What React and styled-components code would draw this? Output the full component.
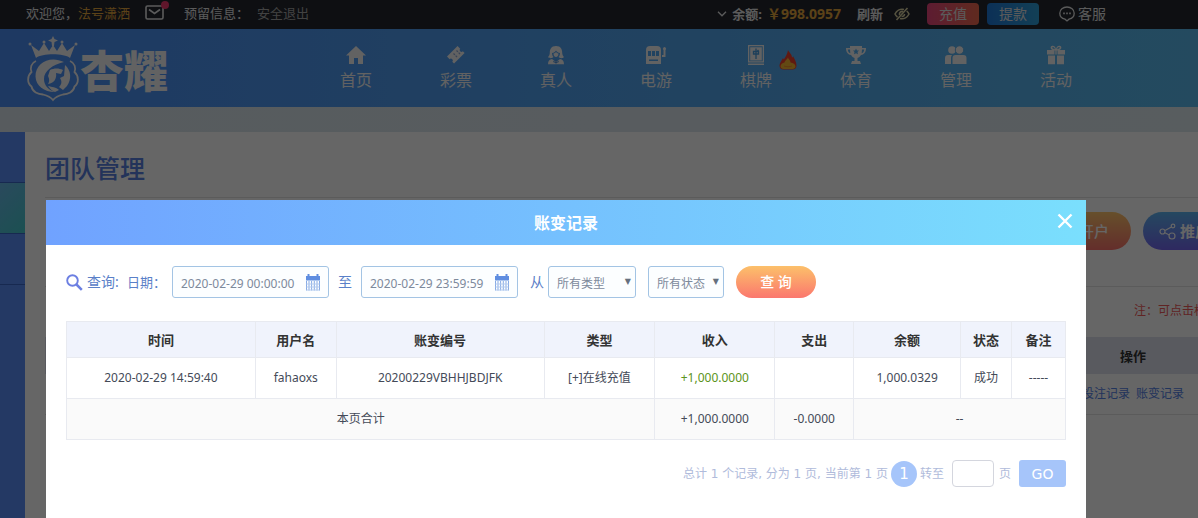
import { useState } from "react";
import styled, { createGlobalStyle, css } from "styled-components";

// *** [ data ] **************************************************************************
const navItems = [
  { label: "首页", icon: "home" },
  { label: "彩票", icon: "ticket" },
  { label: "真人", icon: "dealer" },
  { label: "电游", icon: "slots" },
  { label: "棋牌", icon: "tile", hot: true },
  { label: "体育", icon: "trophy" },
  { label: "管理", icon: "users" },
  { label: "活动", icon: "gift" },
];

const columns = [
  { label: "时间", width: 18.9 },
  { label: "用户名", width: 8.1 },
  { label: "账变编号", width: 20.8 },
  { label: "类型", width: 11.1 },
  { label: "收入", width: 12 },
  { label: "支出", width: 7.9 },
  { label: "余额", width: 10.7 },
  { label: "状态", width: 5.1 },
  { label: "备注", width: 5.4 },
];

const records = [
  {
    time: "2020-02-29 14:59:40",
    user: "fahaoxs",
    number: "20200229VBHHJBDJFK",
    type: "[+]在线充值",
    income: "+1,000.0000",
    expense: "",
    balance: "1,000.0329",
    status: "成功",
    note: "-----",
  },
];

// *** [ icons ] *************************************************************************
const navPaths = {
  home: <path d="M10 1 0 10.500h3V19h5v-6h4v6h5v-8.500h3z" />,
  ticket: (
    <>
      <path d="M12 0l3 3a2 2 0 0 0 3 3l2 2L8 20l-2-2a2 2 0 0 0-3-3l-3-3z" transform="translate(1 1) scale(.88)" />
      <path d="M7.500 8.500l4 4M10.500 5.500l4 4" stroke="#8fa9d8" strokeWidth="1.300" strokeDasharray="2 1" />
    </>
  ),
  dealer: (
    <>
      <path
        fillRule="evenodd"
        d="M10 1C5 1 3.800 4.500 3.800 8c0 1.500-.8 3-1.800 4 1 1.300 2.500 1.300 4 1l1.500-1c-1-1-1.500-2.500-1.500-4 2 0 3-1 4-2.500C11 7 12 8 14 8c0 1.500-.5 3-1.500 4l1.500 1c1.500.3 3 .3 4-1-1-1-1.800-2.500-1.800-4C16.200 4.500 15 1 10 1z"
      />
      <path d="M7.500 8.500c1.200-.3 2-.8 2.500-1.500.5.700 1.300 1.200 2.500 1.500 0 2-1 3.500-2.500 3.500s-2.500-1.500-2.500-3.500z" />
      <path d="M6 14c-2.500.3-4 2-4 5.300h16c0-3.300-1.500-5-4-5.300l-2.500 2h-3z" />
      <path d="M10 14.500v4M7.300 16.500l2.700 1.200 2.700-1.200" fill="none" stroke="#4f93dd" strokeWidth="1.200" />
    </>
  ),
  slots: (
    <>
      <path
        fillRule="evenodd"
        d="M4 1h7a4 4 0 0 1 4 4v14H0V5a4 4 0 0 1 4-4zM2 6v5h3V6zm4 0v5h3V6zm4 0v5h3V6zm-7 8.500V16h9v-1.500z"
      />
      <path d="M16 10h1.500V5a1.600 1.600 0 1 1 2 0v7H16z" />
    </>
  ),
  tile: (
    <>
      <path fillRule="evenodd" d="M2 0h16v17.500H2zm1.300 1.300v15h13.400v-15z" />
      <path d="M4.200 2.200h11.600v13.200H4.200zM2 18.500h16V20H2z" />
      <path d="M10 3.500v10.500M7.500 6.500h5V9h-5zM12.500 5l-1 1" fill="none" stroke="#4a9de0" strokeWidth="1.300" />
    </>
  ),
  trophy: (
    <path
      fillRule="evenodd"
      d="M4 1h12v2h4c0 4-1.500 6.500-5 7-1 1.500-2 2.500-3.500 3v3H14l1 3H5l1-3h2.500v-3C7 12.500 6 11.500 5 10 1.500 9.500 0 7 0 3h4zM1.800 4.500C2 6.500 2.800 7.800 4.300 8.300L4 4.500zm16.400 0H16l-.3 3.800c1.500-.5 2.300-1.800 2.500-3.800zM10 3.500l-1 2H7l1.500 1.600L8 9.300l2-1 2 1-.5-2.200L13 5.500h-2z"
    />
  ),
  users: (
    <>
      <circle cx="6" cy="5" r="3.800" />
      <circle cx="13.500" cy="5" r="4.200" stroke="#50a4e2" strokeWidth=".8" />
      <path d="M-1 19v-6c0-2 1-3 3-3h4c-.8 1-1 2-1 3v6zM6.500 19v-6c0-2 1-3 3-3h8c2 0 3 1 3 3v6z" />
    </>
  ),
  gift: (
    <path
      fillRule="evenodd"
      d="M1 5h5.500C4 4 4 1 6.500.8 8.500.6 9.500 2.500 10 4c.5-1.500 1.500-3.400 3.500-3.200C16 1 16 4 13.500 5H19v4.500h-7.500V5.500h-.8v4H9.300v-4h-.8v4H1zM6.800 2C5.500 2.300 6.500 4 9 4.300 8.500 2.800 7.800 1.800 6.800 2zm6.400 0c-1-.2-1.700.8-2.200 2.300 2.500-.3 3.500-2 2.200-2.300zM2 10.500h7v8.700H2zm9 0h7v8.700h-7z"
    />
  ),
};

function NavIcon({ name }) {
  return (
    <svg width="22" height="20" viewBox="-1 0 22 20" fill="currentColor" aria-hidden="true">
      {navPaths[name]}
    </svg>
  );
}

function FlameIcon() {
  return (
    <svg width="18" height="20" viewBox="0 0 18 20" aria-hidden="true">
      <path
        d="M9 0c1 2.500 4 4 4 7.500.8-.3 1-.8 1-1.500 1.500 3 3.500 6 3.500 9.500 0 2.500-1.500 4-4 4h-9c-2.500 0-4-1.500-4-4C.5 13 2.500 11 4 8l.8 1.500C6.500 7 8.500 4 9 0z"
        fill="#f0402c"
      />
      <path d="M9 7.500c.3 2 2.500 2.500 2.500 5 2.500.5 5 1.800 5 3.800 0 1.800-1.500 2.700-3 2.700h-9c-1.500 0-3-.9-3-2.700 0-2 2-3.300 4-3.800 0-2 3-3 3.500-5z" fill="#f7b731" />
      <path d="M5 16c2 1 6 1 8 0" fill="none" stroke="#f08a2c" />
    </svg>
  );
}

function LogoMark() {
  return (
    <svg width="54" height="67" viewBox="0 0 54 67" fill="currentColor" aria-hidden="true">
      {/* Krone */}
      <path d="M10 23 5 10l8 6 5-8 5 8 4-6 4 6 5-8 5 8 8-6-5 13c-6-5-28-5-34 0z" />
      <path d="M27 1l1.500 3L32 5.500 28.500 7 28 11h-2l-.5-4L22 5.500 25.500 4z" />
      <circle cx="4" cy="9" r="1.500" />
      <circle cx="18" cy="7" r="1.500" />
      <circle cx="36" cy="7" r="1.500" />
      <circle cx="50" cy="9" r="1.500" />
      {/* Blütenrahmen */}
      <path
        d="M10 26c-5 2-6 7-4.500 11C1 41 1 48 5.500 51.500 6.500 57 12 59.500 17 59.500c4 1 8 3 10 5.500 2-2.500 6-4.500 10-5.500 5 0 10.500-2.500 11.500-8C53 48 53 41 48.500 37 50 33 49 28 44 26"
        fill="none"
        stroke="currentColor"
        strokeWidth="1.800"
      />
      {/* Kopf im Kreis */}
      <path d="M38 27C24 20 9 28 9.500 41.500 10 51 18 57 29 57c-7-2-11-7-11-13 0-8 8-14 20-17z" />
      <path d="M24 35c4-2 9-2 13 0l-2 4-5-1c1 6-2 10-8 11 2-3 1-6 0-8z" />
      <path d="M39 30c6 5 7 14 2 21l-4 4-4-3c3-3 3-6 1-9l4-2z" />
      <path d="M22 51c4 1 8 1 11 4l-4 2c-3-1-5-3-7-6z" />
    </svg>
  );
}

function MailIcon() {
  return (
    <svg width="19" height="15" viewBox="0 0 19 15" fill="none" stroke="currentColor" strokeWidth="1.600" aria-hidden="true">
      <rect x="1" y="1" width="17" height="13" rx="1.500" />
      <path d="m4 4.500 5.500 4 5.500-4" />
    </svg>
  );
}

function ChevronIcon() {
  return (
    <svg width="10" height="6" viewBox="0 0 10 6" fill="none" stroke="currentColor" strokeWidth="1.300" aria-hidden="true">
      <path d="m1 .8 4 4 4-4" />
    </svg>
  );
}

function HiddenEyeIcon() {
  return (
    <svg width="18" height="14" viewBox="0 0 16 14" fill="none" stroke="currentColor" strokeWidth="1.600" aria-hidden="true">
      <path d="M10 2.500C6 1.500 2.500 4 1 7c.6 1.300 1.500 2.300 2.500 3M6 11.500c4 1 7.500-1.500 9-4.500-.6-1.300-1.300-2.200-2.300-3M13.500 1l-11 12" />
      <path d="M9 4.500C7 4 5 5.500 5.500 8M7.500 9.500c1.800.3 3-1 3-2.500" />
    </svg>
  );
}

function ChatIcon() {
  return (
    <svg width="16" height="16" viewBox="0 0 16 16" fill="none" stroke="currentColor" strokeWidth="1.300" aria-hidden="true">
      <path d="M6 13.200C3 12.500.8 10.200.8 7.200.8 3.600 4 1 8 1s7.200 2.600 7.200 6.200c0 3-2.200 5.300-5.200 6L8 15z" />
      <path d="M4.200 7.300h1.600M7.200 7.300h1.600M10.200 7.300h1.600" strokeWidth="1.700" />
    </svg>
  );
}

function ShareIcon() {
  return (
    <svg width="17" height="17" viewBox="0 0 17 17" fill="none" stroke="currentColor" strokeWidth="1.200" aria-hidden="true">
      <circle cx="3.500" cy="8.500" r="2.500" />
      <circle cx="14" cy="3" r="1.800" />
      <circle cx="13" cy="13" r="3" />
      <path d="m6 7.500 6.400-3.600M5.800 9.700l4.500 2.300" />
    </svg>
  );
}

function SearchIcon() {
  return (
    <svg width="17" height="17" viewBox="0 0 17 17" fill="none" stroke="#6c7fe2" aria-hidden="true">
      <circle cx="6.500" cy="6.500" r="5.300" strokeWidth="1.900" />
      <path d="m10.500 10.500 5.300 5.300" strokeWidth="2.500" />
    </svg>
  );
}

function CalendarIcon() {
  return (
    <svg width="16" height="17" viewBox="0 0 16 17" aria-hidden="true">
      <path d="M1 2h1.500V0h2v2h7V0h2v2H15v4.500H1z" fill="#5f8de0" />
      <path d="M1.500 7v9.500M4 7v9.500M6.600 7v9.500M9.300 7v9.500M12 7v9.500M14.500 7v9.500" fill="none" stroke="#86aae4" />
      <path d="M1.500 10h13M1.500 13h13M1.500 16h13" fill="none" stroke="#b4cbef" />
    </svg>
  );
}

function CloseIcon() {
  return (
    <svg width="16" height="16" viewBox="0 0 16 16" fill="none" stroke="currentColor" strokeWidth="2.400" aria-hidden="true">
      <path d="m1.500 1.500 13 13M14.500 1.500l-13 13" />
    </svg>
  );
}

// *** [ page ] **************************************************************************
function TopBar() {
  return (
    <TopBarContainer>
      <TopGroup>
        <span>
          欢迎您，<UserName>法号潇洒</UserName>
        </span>
        <MailButton type="button" aria-label="站内信">
          <MailIcon />
          <UnreadDot />
        </MailButton>
        <span>预留信息：</span>
        <LogoutLink href="#logout">安全退出</LogoutLink>
      </TopGroup>

      <AccountGroup>
        <Balance>
          <ChevronIcon />
          <strong>余额:</strong>
          <Amount>￥998.0957</Amount>
        </Balance>
        <RefreshGroup>
          <TextButton type="button">刷新</TextButton>
          <EyeButton type="button" aria-label="隐藏余额">
            <HiddenEyeIcon />
          </EyeButton>
        </RefreshGroup>
        <MoneyGroup>
          <MoneyButton type="button" $variant="deposit">
            充值
          </MoneyButton>
          <MoneyButton type="button" $variant="withdraw">
            提款
          </MoneyButton>
        </MoneyGroup>
        <ServiceLink href="#service">
          <ChatIcon />
          客服
        </ServiceLink>
      </AccountGroup>
    </TopBarContainer>
  );
}

function Header() {
  return (
    <HeaderContainer>
      <Logo href="#home">
        <LogoMark />
        <span>杏耀</span>
      </Logo>
      <Nav>
        {navItems.map((item) => (
          <NavLink key={item.label} href={`#${item.icon}`}>
            <NavIcon name={item.icon} />
            {item.label}
            {item.hot && (
              <HotBadge>
                <FlameIcon />
              </HotBadge>
            )}
          </NavLink>
        ))}
      </Nav>
    </HeaderContainer>
  );
}

function TeamPage() {
  return (
    <Body>
      <Sidebar>
        <SidebarItem />
        <SidebarItem $active />
        <SidebarItem />
      </Sidebar>
      <Content>
        <PageTitle>团队管理</PageTitle>
        <ActionRow>
          <PillButton type="button" $variant="open">
            开户
          </PillButton>
          <PillButton type="button" $variant="promote">
            <ShareIcon />
            推广
          </PillButton>
        </ActionRow>
        <Hint>注：可点击标题进行排序</Hint>
        <TeamTable>
          <thead>
            <tr>
              <th />
              <th>操作</th>
            </tr>
          </thead>
          <tbody>
            <tr>
              <td />
              <td>
                <a href="#bets">投注记录</a> <a href="#changes">账变记录</a>
              </td>
            </tr>
          </tbody>
        </TeamTable>
      </Content>
    </Body>
  );
}

// *** [ dialog ] ************************************************************************
function RecordsDialog({ onClose }) {
  const [from, setFrom] = useState("2020-02-29 00:00:00");
  const [to, setTo] = useState("2020-02-29 23:59:59");
  const [page, setPage] = useState("");

  return (
    <Overlay>
      <Dialog role="dialog" aria-labelledby="dialog-title">
        <DialogHeader>
          <h2 id="dialog-title">账变记录</h2>
          <CloseButton type="button" aria-label="关闭" onClick={onClose}>
            <CloseIcon />
          </CloseButton>
        </DialogHeader>

        <DialogBody>
          <FilterForm onSubmit={(event) => event.preventDefault()}>
            <FilterTitle>
              <SearchIcon />
              查询:
            </FilterTitle>
            <DateLabel htmlFor="date-from">日期：</DateLabel>
            <DateField>
              <input id="date-from" value={from} onChange={(event) => setFrom(event.target.value)} />
              <CalendarIcon />
            </DateField>
            <RangeLabel htmlFor="date-to">至</RangeLabel>
            <DateField>
              <input id="date-to" value={to} onChange={(event) => setTo(event.target.value)} />
              <CalendarIcon />
            </DateField>
            <TypeLabel htmlFor="type">从</TypeLabel>
            <SelectField $width={88}>
              <select id="type">
                <option>所有类型</option>
              </select>
            </SelectField>
            <SelectField $width={76} $spaced>
              <select aria-label="状态">
                <option>所有状态</option>
              </select>
            </SelectField>
            <SubmitButton type="submit">查 询</SubmitButton>
          </FilterForm>

          <RecordsTable>
            <colgroup>
              {columns.map((column) => (
                <col key={column.label} style={{ width: `${column.width}%` }} />
              ))}
            </colgroup>
            <thead>
              <tr>
                {columns.map((column) => (
                  <th key={column.label}>{column.label}</th>
                ))}
              </tr>
            </thead>
            <tbody>
              {records.map((record) => (
                <tr key={record.number}>
                  <td>{record.time}</td>
                  <td>{record.user}</td>
                  <td>{record.number}</td>
                  <td>{record.type}</td>
                  <IncomeCell>{record.income}</IncomeCell>
                  <td>{record.expense}</td>
                  <td>{record.balance}</td>
                  <td>{record.status}</td>
                  <td>{record.note}</td>
                </tr>
              ))}
            </tbody>
            <tfoot>
              <tr>
                <td colSpan={4}>本页合计</td>
                <td>+1,000.0000</td>
                <td>-0.0000</td>
                <td colSpan={3}>--</td>
              </tr>
            </tfoot>
          </RecordsTable>

          <Pagination>
            <span>总计 1 个记录, 分为 1 页, 当前第 1 页</span>
            <CurrentPage>1</CurrentPage>
            <label htmlFor="page">转至</label>
            <PageInput id="page" value={page} onChange={(event) => setPage(event.target.value)} />
            <span>页</span>
            <GoButton type="button">GO</GoButton>
          </Pagination>
        </DialogBody>
      </Dialog>
    </Overlay>
  );
}

export default function App() {
  const [isDialogOpen, setIsDialogOpen] = useState(true);

  return (
    <>
      <GlobalStyle />
      <Page>
        <TopBar />
        <Header />
        <TeamPage />
      </Page>
      {isDialogOpen && <RecordsDialog onClose={() => setIsDialogOpen(false)} />}
    </>
  );
}

// *** [ styles ] ************************************************************************
const GlobalStyle = createGlobalStyle`
  *, *::before, *::after {
    box-sizing: border-box;
  }

  body {
    margin: 0;
    font-family: "Noto Sans", "Noto Sans CJK SC", sans-serif;
    font-size: 13px;
    line-height: 20px;
    color: #333;
  }

  button, input, select {
    font: inherit;
    color: inherit;
  }

  button {
    padding: 0;
    border: none;
    background: none;
    cursor: pointer;
  }

  a {
    color: inherit;
    text-decoration: none;
  }

  svg {
    display: block;
    flex-shrink: 0;
  }

  h1, h2 {
    margin: 0;
  }
`;

const Page = styled.div`
  min-height: 100vh;
  display: flex;
  flex-direction: column;
  overflow: hidden;
  background: linear-gradient(90deg, #d9e4ec, #dde8ee);
`;

const TopBarContainer = styled.div`
  display: flex;
  justify-content: space-between;
  height: 29px;
  padding: 0 92px 4px 26px;
  background: #23272f;
  color: #e4e4e4;
`;

const TopGroup = styled.div`
  display: flex;
  align-items: center;
`;

const UserName = styled.span`
  color: #e3a53c;
`;

const MailButton = styled.button`
  position: relative;
  margin: 0 20px 0 15px;
`;

const UnreadDot = styled.span`
  position: absolute;
  top: -4px;
  right: -5px;
  width: 8px;
  height: 8px;
  border-radius: 50%;
  background: #f0386b;
`;

const LogoutLink = styled.a`
  margin-left: 8px;
  color: #a5a5a5;
`;

const AccountGroup = styled.div`
  display: flex;
  align-items: center;
  gap: 16px;
  padding-top: 2px;
`;

const Balance = styled.div`
  display: flex;
  align-items: center;
  gap: 5px;
`;

const Amount = styled.strong`
  font-size: 14px;
  color: #e3a53c;
`;

const RefreshGroup = styled.div`
  display: flex;
  align-items: center;
  gap: 10px;
`;

const TextButton = styled.button`
  font-weight: bold;
`;

const EyeButton = styled.button`
  color: #d8cfa0;
`;

const MoneyGroup = styled.div`
  display: flex;
  gap: 8px;
`;

const MoneyButton = styled.button`
  width: 52px;
  height: 22px;
  border-radius: 4px;
  font-size: 14px;
  background: ${(props) =>
    props.$variant === "deposit"
      ? "linear-gradient(90deg, #e8467c, #ee6a4e)"
      : "linear-gradient(90deg, #1f78d8, #2f9fd8)"};
`;

const ServiceLink = styled.a`
  display: flex;
  align-items: center;
  gap: 3px;
  margin-left: 4px;
  font-size: 14px;
`;

const HeaderContainer = styled.header`
  display: flex;
  height: 78px;
  padding-left: 26px;
  background: linear-gradient(90deg, #4b8ff5, #5abaee);
  color: #f4f4f4;
`;

const Logo = styled.a`
  display: flex;
  align-items: center;
  width: 280px; // bis zum ersten Nav-Eintrag

  span {
    padding-top: 6px;
    font-size: 44px;
    font-weight: 900;
    line-height: 44px;
  }
`;

const Nav = styled.nav`
  display: flex;
`;

const NavLink = styled.a`
  position: relative;
  display: flex;
  flex-direction: column;
  align-items: center;
  gap: 5px;
  width: 100px;
  padding-top: 16px;
  font-size: 16px;
`;

const HotBadge = styled.span`
  position: absolute;
  top: 21px;
  right: 9px;
`;

const Body = styled.div`
  display: flex;
  flex: 1;
  min-width: 1280px; // schmalere Fenster schneiden rechts ab
  margin-top: 25px;
`;

const Sidebar = styled.aside`
  width: 25px;
  background: #5b8ffa;
`;

const SidebarItem = styled.div`
  height: 51px;
  border-bottom: 1px solid #3a66c8;

  ${(props) =>
    props.$active &&
    css`
      background: linear-gradient(135deg, #69b8e8, #45c8cc);
    `}
`;

const Content = styled.main`
  flex: 1;
  padding: 20px 14px 0 20px;
  background: #fff;
`;

const PageTitle = styled.h1`
  padding-bottom: 13px;
  border-bottom: 1px solid #e4e4e4;
  font-size: 25px;
  font-weight: 500;
  line-height: 32px;
  color: #5781e0;
`;

const ActionRow = styled.div`
  display: flex;
  justify-content: flex-end;
  gap: 12px;
  padding: 14px 0 36px;
  border-bottom: 1px solid #e4e4e4;
`;

const PillButton = styled.button`
  display: flex;
  align-items: center;
  gap: 4px;
  width: 123px;
  height: 38px;
  border-radius: 19px;
  font-size: 15px;
  font-weight: bold;
  color: #fff;

  ${(props) =>
    props.$variant === "open"
      ? css`
          justify-content: flex-end;
          padding-right: 22px;
          background: linear-gradient(#ffc66b, #f9736d);
          font-weight: 500;
        `
      : css`
          padding-left: 16px;
          background: linear-gradient(#5db4f0, #7467f0);
        `}
`;

const Hint = styled.p`
  margin: 0;
  padding: 14px 0 16px;
  font-size: 12px;
  text-align: right;
  color: #f05a5a;
`;

const TeamTable = styled.table`
  width: 100%;
  border-collapse: collapse;

  th {
    height: 37px;
    padding: 0;
    background: #dfe2ee;
  }

  td {
    height: 40px;
    padding: 0;
    border-bottom: 1px solid #e4e4e4;
    font-size: 12px;
    text-align: center;
    color: #5482e6;
  }

  th:last-child {
    width: 266px;
  }

  a + a {
    margin-left: 3px;
  }
`;

const Overlay = styled.div`
  position: fixed;
  inset: 0;
  padding: 200px 112px 0 46px;
  overflow: hidden;
  background: rgba(0, 0, 0, 0.6);
`;

const Dialog = styled.section`
  min-height: 100%;
  background: #fff;
`;

const DialogHeader = styled.div`
  display: flex;
  align-items: center;
  justify-content: center;
  position: relative;
  height: 45px;
  background: linear-gradient(90deg, #70a2ff, #7adffd);
  color: #fff;

  h2 {
    font-size: 16px;
    font-weight: bold;
  }
`;

const CloseButton = styled.button`
  position: absolute;
  top: 13px;
  right: 13px;
`;

const DialogBody = styled.div`
  padding: 21px 20px;
`;

const FilterForm = styled.form`
  display: flex;
  align-items: center;
  height: 32px;
  color: #5a80c8;
`;

const FilterTitle = styled.span`
  display: flex;
  align-items: center;
  gap: 4px;
  width: 61px;
  font-size: 14px;
`;

const DateLabel = styled.label`
  width: 45px;
`;

const fieldStyle = css`
  height: 32px;
  border: 1px solid #a3c4e4;
  border-radius: 3px;
  background: #fcfeff;
  font-size: 12px;
  color: #7e8a9c;
`;

const DateField = styled.div`
  ${fieldStyle}
  display: flex;
  align-items: center;
  width: 157px;
  padding: 0 7px 0 8px;

  input {
    flex: 1;
    min-width: 0;
    padding: 3px 0 0;
    border: none;
    outline: none;
    background: none;
  }
`;

const RangeLabel = styled.label`
  width: 32px;
  font-size: 14px;
  text-align: center;
`;

const TypeLabel = styled.label`
  width: 30px;
  padding-left: 12px;
  font-size: 14px;
`;

const SelectField = styled.div`
  position: relative;
  width: ${(props) => props.$width}px;
  margin-left: ${(props) => (props.$spaced ? 12 : 0)}px;

  select {
    ${fieldStyle}
    width: 100%;
    padding: 3px 8px 0;
    appearance: none;
  }

  &::after {
    content: "▼";
    position: absolute;
    top: 6px;
    right: 5px;
    font-family: "DejaVu Sans", sans-serif;
    font-size: 8px;
    color: #66707e;
    pointer-events: none;
  }
`;

const SubmitButton = styled.button`
  width: 80px;
  height: 32px;
  margin-left: 12px;
  border-radius: 16px;
  background: linear-gradient(#fcc06a, #fb776e);
  font-size: 14px;
  font-weight: 500;
  color: #fff;
`;

const RecordsTable = styled.table`
  width: 100%;
  margin-top: 23px;
  border-collapse: collapse;
  table-layout: fixed;

  th,
  td {
    height: 41px;
    padding: 0;
    border: 1px solid #e8eaf0;
    font-size: 12px;
    text-align: center;
  }

  th {
    height: 36px;
    background: #f0f3fc;
    font-size: 13px;
  }

  td {
    color: #444a58;
  }

  tfoot td {
    background: #fafafa;
  }
`;

const IncomeCell = styled.td`
  && {
    color: #5c9420;
  }
`;

const Pagination = styled.div`
  display: flex;
  align-items: center;
  justify-content: flex-end;
  gap: 3px;
  margin-top: 20px;
  font-family: "DejaVu Sans", "Noto Sans CJK SC", sans-serif;
  font-size: 12px;
  color: #b0bbdb;
`;

const CurrentPage = styled.span`
  width: 26px;
  border-radius: 50%;
  background: #a6c5fa;
  font-size: 15px;
  line-height: 26px;
  text-align: center;
  color: #fff;
`;

const PageInput = styled.input`
  width: 42px;
  height: 27px;
  margin: 0 2px 0 5px;
  border: 1px solid #d4d6de;
  border-radius: 4px;
  background: #fff;
`;

const GoButton = styled.button`
  width: 47px;
  height: 27px;
  margin-left: 5px;
  border-radius: 3px;
  background: #a6c5fa;
  font-size: 14px;
  color: #fff;
`;
